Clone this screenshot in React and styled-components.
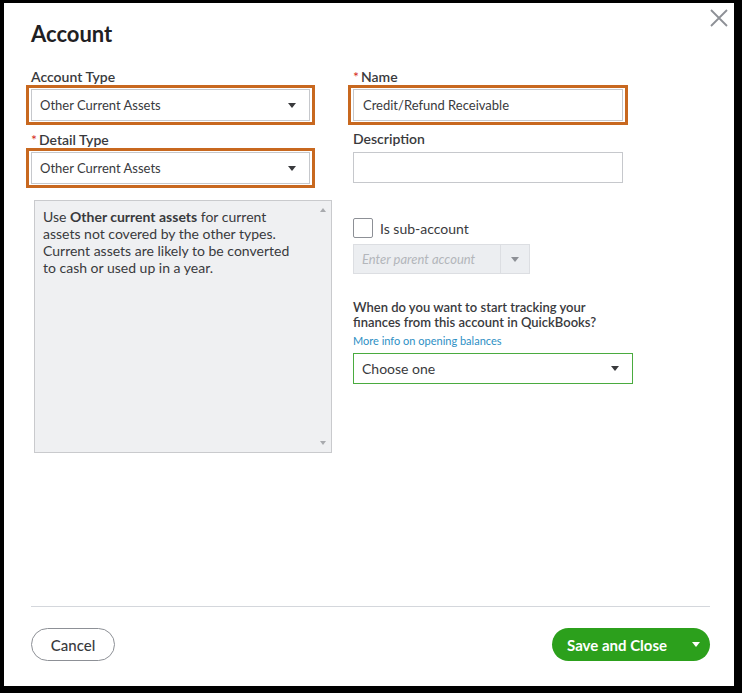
import styled, { createGlobalStyle } from "styled-components";

const Global = createGlobalStyle`
  html, body {
    margin: 0;
    padding: 0;
    background: #000;
  }
  body {
    font-family: "Lato", "Open Sans", sans-serif;
    color: #393a3d;
  }
  * { box-sizing: border-box; }
`;

export default function App() {
  return (
    <>
      <Global />
      <Frame>
        <Panel>
          <Header>
            <Title>Account</Title>
            <CloseBtn aria-label="close">
              <svg width="18" height="18" viewBox="0 0 18 18">
                <path d="M1 1 L17 17 M17 1 L1 17" stroke="#8d9096" strokeWidth="1.8" />
              </svg>
            </CloseBtn>
          </Header>

          <Form>
            <Column>
              <Label>Account Type</Label>
              <Highlight>
                <Select>
                  <span>Other Current Assets</span>
                  <Caret />
                </Select>
              </Highlight>
              <Label $gap={7}>
                <Req>*</Req>Detail Type
              </Label>
              <Highlight>
                <Select>
                  <span>Other Current Assets</span>
                  <Caret />
                </Select>
              </Highlight>
              <HelpBox>
                <HelpText>
                  Use <b>Other current assets</b> for current assets not covered by the other
                  types. Current assets are likely to be converted to cash or used up in a year.
                </HelpText>
                <ScrollArrow $up />
                <ScrollArrow />
              </HelpBox>
            </Column>

            <Column>
              <Label>
                <Req>*</Req>Name
              </Label>
              <Highlight $wide>
                <Input>Credit/Refund Receivable</Input>
              </Highlight>
              <Label $gap={6}>Description</Label>
              <TextInput />
              <CheckRow>
                <CheckBox />
                <span>Is sub-account</span>
              </CheckRow>
              <ParentField>
                <Placeholder>Enter parent account</Placeholder>
                <ParentToggle>
                  <Caret $light />
                </ParentToggle>
              </ParentField>
              <Question>
                When do you want to start tracking your
                <br />
                finances from this account in QuickBooks?
              </Question>
              <Link>More info on opening balances</Link>
              <GreenSelect>
                <span>Choose one</span>
                <Caret />
              </GreenSelect>
            </Column>
          </Form>

          <Footer>
            <CancelBtn>Cancel</CancelBtn>
            <SaveBtn>
              <span>Save and Close</span>
              <Caret $white />
            </SaveBtn>
          </Footer>
        </Panel>
      </Frame>
    </>
  );
}

const Frame = styled.div`
  width: 742px;
  height: 693px;
  padding: 3px 8px 7px 4px;
`;

const Panel = styled.div`
  background: #fff;
  height: 683px;
  display: flex;
  flex-direction: column;
  padding: 0 24px 25px 27px;
`;

const Header = styled.div`
  display: flex;
  justify-content: space-between;
  align-items: flex-start;
  height: 66px;
  margin-right: -18px;
`;

const Title = styled.h1`
  margin: 17px 0 0;
  font-size: 22px;
  line-height: 28px;
  font-weight: 700;
  color: #1f2023;
`;

const CloseBtn = styled.div`
  margin-top: 6px;
  width: 18px;
  height: 18px;
  display: flex;
`;

const Form = styled.div`
  flex: 1;
  display: grid;
  grid-template-columns: 322px 1fr;
  align-items: start;
`;

const Column = styled.div`
  display: flex;
  flex-direction: column;
  align-items: flex-start;
`;

const Label = styled.div`
  margin-top: ${(p) => p.$gap || 0}px;
  font-size: 14px;
  line-height: 16px;
  font-weight: 600;
  color: #393a3d;
`;

const Req = styled.span`
  color: #d52b1e;
  margin-right: 2px;
  font-weight: 400;
`;

const Highlight = styled.div`
  margin-left: -5px;
  width: ${(p) => (p.$wide ? 280 : 289)}px;
  height: 40px;
  border: 3px solid #c8681f;
  padding: 1px 2px 1px 2px;
  display: flex;
`;

const Select = styled.div`
  flex: 1;
  border: 1px solid #c6c8cc;
  background: #fff;
  display: flex;
  align-items: center;
  justify-content: space-between;
  padding: 0 13px 0 8px;
  font-size: 13px;
  color: #393a3d;
`;

const Input = styled(Select)`
  padding-left: 9px;
`;

const Caret = styled.span`
  width: 0;
  height: 0;
  border-left: 4px solid transparent;
  border-right: 4px solid transparent;
  border-top: 5px solid
    ${(p) => (p.$white ? "#fff" : p.$light ? "#8d9096" : "#393a3d")};
`;

const HelpBox = styled.div`
  position: relative;
  margin: 12px 0 0 3px;
  width: 298px;
  height: 253px;
  background: #eff0f2;
  border: 1px solid #c9cacd;
`;

const HelpText = styled.p`
  margin: 0;
  padding: 7px 29px 0 8px;
  font-size: 14px;
  line-height: 17px;
  color: #393a3d;

  b {
    font-weight: 700;
  }
`;

const ScrollArrow = styled.span`
  position: absolute;
  right: 5px;
  ${(p) => (p.$up ? "top: 7px;" : "bottom: 7px;")}
  width: 0;
  height: 0;
  border-left: 3px solid transparent;
  border-right: 3px solid transparent;
  ${(p) =>
    p.$up ? "border-bottom: 4px solid #a8aaae;" : "border-top: 4px solid #a8aaae;"}
`;

const TextInput = styled.div`
  margin-top: 5px;
  width: 270px;
  height: 31px;
  border: 1px solid #c6c8cc;
  background: #fff;
`;

const CheckRow = styled.div`
  margin-top: 35px;
  display: flex;
  align-items: center;
  gap: 7px;
  font-size: 14px;
  color: #393a3d;
`;

const CheckBox = styled.span`
  width: 20px;
  height: 20px;
  border: 1px solid #8d9096;
  border-radius: 2px;
  background: #fff;
`;

const ParentField = styled.div`
  margin-top: 6px;
  width: 177px;
  height: 30px;
  background: #eceef1;
  border: 1px solid #dcdee2;
  display: flex;
`;

const Placeholder = styled.span`
  flex: 1;
  padding-left: 8px;
  display: flex;
  align-items: center;
  font-size: 13px;
  font-style: italic;
  color: #b3b6bb;
`;

const ParentToggle = styled.span`
  width: 29px;
  border-left: 1px solid #dcdee2;
  display: flex;
  align-items: center;
  justify-content: center;
`;

const Question = styled.div`
  margin-top: 26px;
  font-size: 13px;
  line-height: 15px;
  font-weight: 600;
  color: #393a3d;
`;

const Link = styled.div`
  margin-top: 4px;
  font-size: 11px;
  line-height: 14px;
  color: #2d8fc4;
`;

const GreenSelect = styled(Select)`
  flex: none;
  margin-top: 5px;
  width: 280px;
  height: 31px;
  border-color: #4aab3f;
  font-size: 14px;
  padding: 0 13px 0 8px;
`;

const Footer = styled.div`
  border-top: 1px solid #d4d7dc;
  width: 679px;
  padding-top: 21px;
  display: flex;
  justify-content: space-between;
  align-items: center;
`;

const CancelBtn = styled.button`
  width: 84px;
  height: 33px;
  border: 1px solid #8d9096;
  border-radius: 17px;
  background: #fff;
  font-family: "Lato", sans-serif;
  font-size: 15px;
  font-weight: 500;
  color: #393a3d;
`;

const SaveBtn = styled.button`
  width: 158px;
  height: 33px;
  border: none;
  border-radius: 17px;
  background: #2ca01c;
  color: #fff;
  font-family: "Lato", sans-serif;
  font-size: 15px;
  font-weight: 700;
  display: flex;
  align-items: center;
  justify-content: space-between;
  padding: 0 10px 0 15px;
`;
